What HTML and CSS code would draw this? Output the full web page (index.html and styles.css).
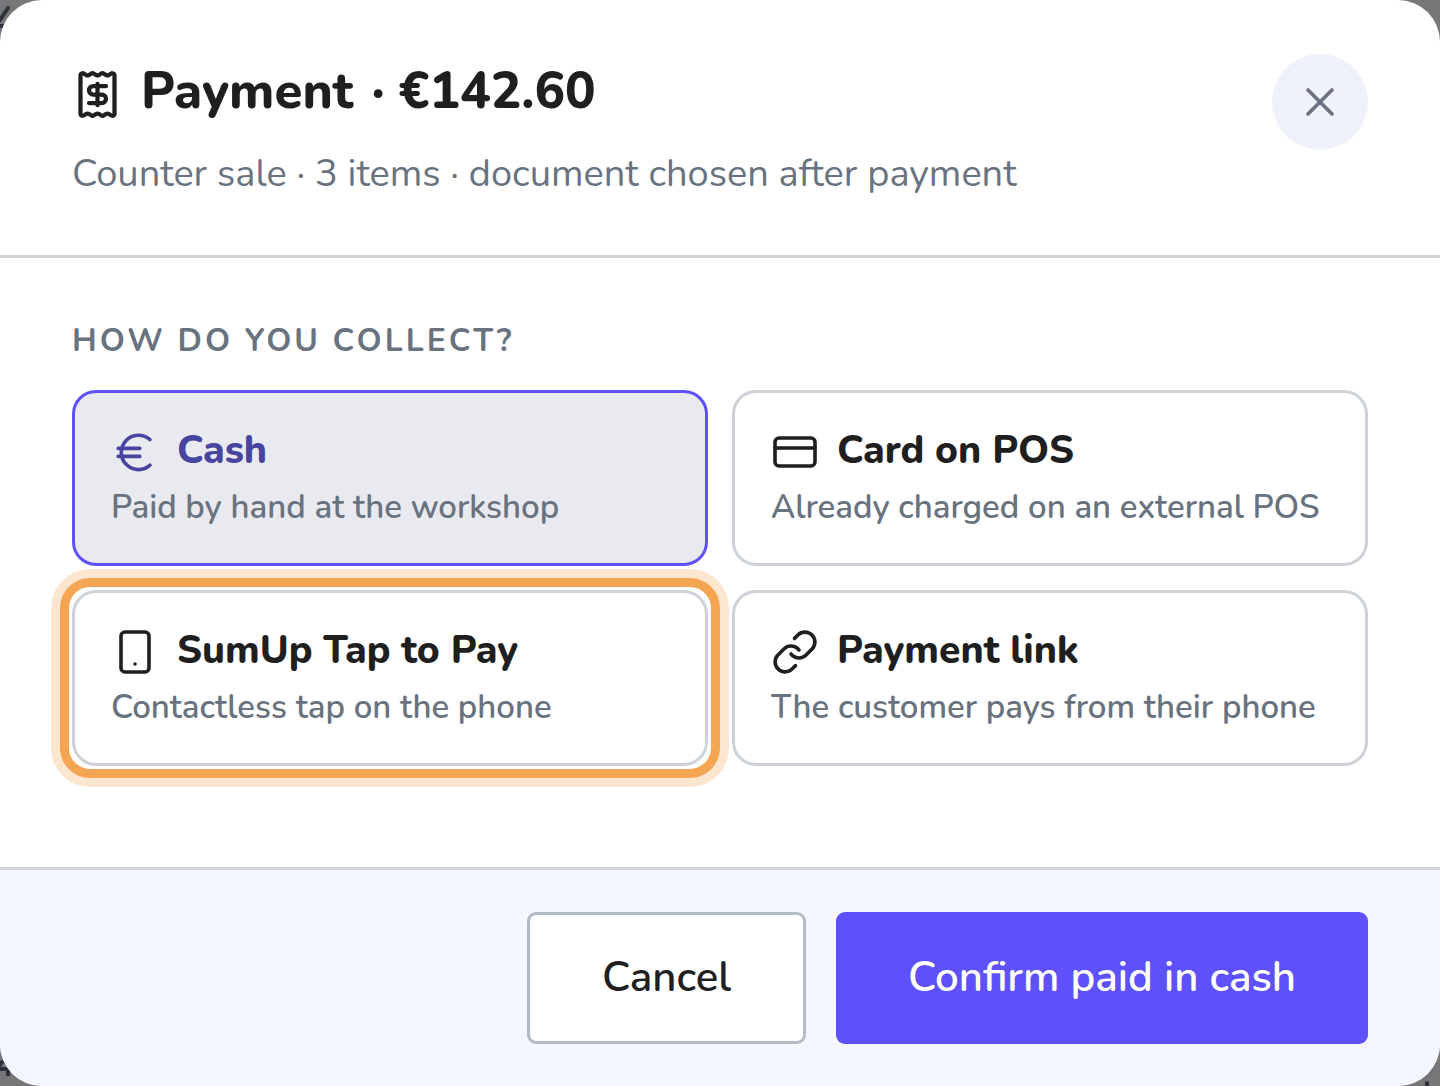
FILE: index.html
```html
<!DOCTYPE html>
<html lang="en">
<head>
    <meta charset="UTF-8">
    <meta name="viewport" content="width=device-width, initial-scale=1.0">
    <title>Payment</title>
    <link rel="stylesheet" href="styles.css">
</head>
<body>

    <!-- Page behind the dialog -->
    <svg class="behind behind-top" viewBox="0 0 12 32" aria-hidden="true"><path d="M0 20 8 8M0 26h4"/></svg>
    <svg class="behind behind-bottom" viewBox="0 0 12 20" aria-hidden="true"><path d="M0 9 2 6M0 13h8v7"/></svg>
    <svg class="behind behind-right" viewBox="0 0 6 6" aria-hidden="true"><path d="M3 3v3"/></svg>

    <div class="dialog" role="dialog" aria-labelledby="dialog-title">
        <header class="dialog-header">
            <div>
                <h1 class="dialog-title" id="dialog-title">
                    <svg class="title-icon" viewBox="0 0 24 24" aria-hidden="true">
                        <path d="M4 3a1 1 0 0 1 1-1 1.3 1.3 0 0 1 .7.2l.933.6a1.3 1.3 0 0 0 1.4 0l.934-.6a1.3 1.3 0 0 1 1.4 0l.933.6a1.3 1.3 0 0 0 1.4 0l.933-.6a1.3 1.3 0 0 1 1.4 0l.934.6a1.3 1.3 0 0 0 1.4 0l.933-.6A1.3 1.3 0 0 1 19 2a1 1 0 0 1 1 1v18a1 1 0 0 1-1 1 1.3 1.3 0 0 1-.7-.2l-.933-.6a1.3 1.3 0 0 0-1.4 0l-.934.6a1.3 1.3 0 0 1-1.4 0l-.933-.6a1.3 1.3 0 0 0-1.4 0l-.933.6a1.3 1.3 0 0 1-1.4 0l-.934-.6a1.3 1.3 0 0 0-1.4 0l-.933.6a1.3 1.3 0 0 1-.7.2 1 1 0 0 1-1-1z"/>
                        <path d="M12 17V7M16 8h-6a2 2 0 0 0 0 4h4a2 2 0 0 1 0 4H8"/>
                    </svg>
                    <span>Payment</span>
                    <span>· €142.60</span>
                </h1>
                <p class="dialog-subtitle">Counter sale · 3 items · document chosen after payment</p>
            </div>
            <button class="close" type="button" aria-label="Close">
                <svg viewBox="0 0 24 24" aria-hidden="true"><path d="M18 6 6 18M6 6l12 12"/></svg>
            </button>
        </header>

        <main class="dialog-body">
            <h2 class="section-label">How do you collect?</h2>
            <div class="methods">
                <button class="method selected" type="button" aria-pressed="true">
                    <span class="method-name">
                        <svg viewBox="0 0 24 24" aria-hidden="true"><path d="M19.500 5.800a8.600 8.600 0 1 0 0 12.800M3.600 10.200H14.400M3.600 14.200H14.400"/></svg>
                        Cash
                    </span>
                    <span class="method-text">Paid by hand at the workshop</span>
                </button>
                <button class="method" type="button" aria-pressed="false">
                    <span class="method-name">
                        <svg viewBox="0 0 24 24" aria-hidden="true"><rect x="2" y="5" width="20" height="14" rx="2"/><path d="M2 10h20"/></svg>
                        Card on POS
                    </span>
                    <span class="method-text">Already charged on an external POS</span>
                </button>
                <button class="method highlight" type="button" aria-pressed="false">
                    <span class="method-name">
                        <svg viewBox="0 0 24 24" aria-hidden="true"><rect x="5" y="2" width="14" height="20" rx="2"/><path d="M12 18h.01"/></svg>
                        SumUp Tap to Pay
                    </span>
                    <span class="method-text">Contactless tap on the phone</span>
                </button>
                <button class="method" type="button" aria-pressed="false">
                    <span class="method-name">
                        <svg viewBox="0 0 24 24" aria-hidden="true"><path d="M10 13a5 5 0 0 0 7.540.540l3-3a5 5 0 0 0-7.070-7.070l-1.720 1.710M14 11a5 5 0 0 0-7.540-.540l-3 3a5 5 0 0 0 7.070 7.070l1.710-1.710"/></svg>
                        Payment link
                    </span>
                    <span class="method-text">The customer pays from their phone</span>
                </button>
            </div>
        </main>

        <footer class="dialog-footer">
            <button class="button" type="button">Cancel</button>
            <button class="button primary" type="button">Confirm paid in cash</button>
        </footer>
    </div>

</body>
</html>
```

FILE: styles.css
```css
* {
    box-sizing: border-box;
}

body {
    font-family: Nunito, Lato, sans-serif;
    background-color: #777779;
    color: #1f1f1f;
    margin: 0;
}

button {
    font-family: inherit;
    color: inherit;
    cursor: pointer;
}

svg {
    fill: none;
    stroke: currentColor;
    stroke-width: 1.8;
    stroke-linecap: round;
    stroke-linejoin: round;
    flex-shrink: 0;
}

.behind {
    position: absolute;
    color: #2c303b;
    stroke-width: 4;
}

.behind-top {
    top: 0;
    left: 0;
    width: 12px;
}

.behind-bottom {
    bottom: 10px;
    left: 0;
    width: 12px;
}

.behind-right {
    bottom: 0;
    right: 10px;
    width: 6px;
}

.dialog {
    position: relative;
    display: flex;
    flex-direction: column;
    min-height: 100vh;
    background-color: white;
    border-radius: 42px;
    overflow: hidden;
}

.dialog-header {
    display: flex;
    justify-content: space-between;
    align-items: flex-start;
    padding: 54px 72px;
    border-bottom: 3px solid #ced3da;
}

.dialog-title {
    display: flex;
    align-items: flex-end;
    gap: 18px;
    margin: 0;
    font-size: 51px;
    line-height: 75px;
    font-weight: 800;
}

.title-icon {
    width: 51px;
    height: 51px;
    margin-bottom: 9px;
    stroke-width: 2;
}

.dialog-subtitle {
    margin: 18px 0 0;
    font-size: 38px;
    line-height: 54px;
    color: #697380;
}

.close {
    display: flex;
    align-items: center;
    justify-content: center;
    width: 96px;
    height: 96px;
    padding: 0;
    border: none;
    border-radius: 50%;
    background-color: #eff1fb;
    color: #697380;
}

.close svg {
    width: 48px;
    height: 48px;
}

.dialog-body {
    flex-grow: 1;
    padding: 60px 72px 100px;
}

.section-label {
    margin: 0 0 26px;
    font-size: 32px;
    line-height: 46px;
    font-weight: 700;
    letter-spacing: 3px;
    text-transform: uppercase;
    color: #697380;
}

.methods {
    display: grid;
    grid-template-columns: 1fr 1fr;
    gap: 24px;
}

.method {
    position: relative;
    padding: 31px 36px;
    border: 3px solid #ced3da;
    border-radius: 24px;
    background-color: white;
    text-align: left;
}

.method-name {
    display: flex;
    align-items: flex-end;
    gap: 18px;
    font-size: 39px;
    line-height: 54px;
    font-weight: 800;
}

.method-name svg {
    width: 48px;
    height: 48px;
    margin-bottom: 2px;
}

.method-text {
    display: block;
    margin-top: 6px;
    font-size: 33px;
    line-height: 48px;
    font-weight: 600;
    color: #697380;
}

.selected {
    border-color: #5f51fa;
    background-color: #e9eaef;
}

.selected .method-name {
    color: #4845a0;
}

.highlight::after {
    content: "";
    position: absolute;
    inset: -15px;
    border: 9px solid #f3a552;
    border-radius: 30px;
    box-shadow: 0 0 0 9px #fce6d0;
}

.dialog-footer {
    display: flex;
    justify-content: flex-end;
    gap: 30px;
    padding: 42px 72px;
    border-top: 3px solid #ced3da;
    background-color: #f4f7ff;
}

.button {
    padding: 33px 72px;
    border: 3px solid #b2bbc6;
    border-radius: 9px;
    background-color: white;
    font-size: 42px;
    line-height: 60px;
    font-weight: 600;
}

.primary {
    border: none;
    background-color: #5e50fa;
    color: white;
}
```
